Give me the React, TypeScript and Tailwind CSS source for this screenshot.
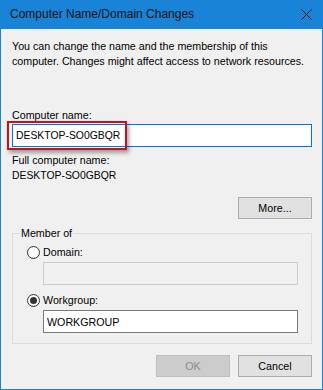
import React from "react"

function Radio({ checked }: { checked?: boolean }) {
  return (
    <span className="w-[13px] h-[13px] rounded-full border border-[#333333] bg-white flex items-center justify-center shrink-0">
      {checked && <span className="w-[7px] h-[7px] rounded-full bg-[#333333]" />}
    </span>
  )
}

export default function App() {
  return (
    <div className="w-[323px] h-[390px] bg-[#1883d7] px-[1px] pb-[1px] flex flex-col font-['Liberation_Sans',Arial,sans-serif] text-[10.7px] leading-[15px] text-black">
      <div className="h-[29px] -mx-[1px] flex items-center justify-between pl-[10px] pr-[11px]">
        <span className="text-[12px] text-[#111111]">Computer Name/Domain Changes</span>
        <svg width="11" height="11" viewBox="0 0 11 11">
          <path d="M0.5 0.5L10.5 10.5M10.5 0.5L0.5 10.5" stroke="#111" strokeWidth="1" />
        </svg>
      </div>

      <div className="flex-1 bg-[#f0f0f0] pl-[11px] pr-[10px] pt-[1px] flex flex-col">
        <p className="mt-[9px] whitespace-nowrap">
          You can change the name and the membership of this
          <br />
          computer. Changes might affect access to network resources.
        </p>

        <label className="mt-[39px]">Computer name:</label>
        <div className="relative mt-[1px]">
          <input
            readOnly
            value="DESKTOP-SO0GBQR"
            className="w-full h-[23px] border border-[#0078d7] bg-white pl-[3px] outline-none text-[10.4px]"
          />
          <div className="absolute -left-[5px] -top-[3px] w-[120px] h-[29px] border-2 border-[#c0141c] shadow-[2px_3px_4px_rgba(0,0,0,0.35)] pointer-events-none" />
        </div>

        <p className="mt-[6px]">Full computer name:</p>
        <p className="text-[10.4px]">DESKTOP-SO0GBQR</p>

        <div className="flex justify-end mt-[14px]">
          <button className="w-[74px] h-[22px] bg-[#e1e1e1] border border-[#adadad]">More...</button>
        </div>

        <fieldset className="mt-[7px] border border-[#dcdcdc] pl-[14px] pr-[13px] pt-[4px] pb-[10px]">
          <legend className="-ml-[7px] px-[1px]">Member of</legend>
          <div className="flex items-center gap-[3px] h-[15px]">
            <Radio />
            <span>Domain:</span>
          </div>
          <div className="ml-[16px] mt-[2px] h-[23px] border border-[#cccccc] bg-[#f0f0f0]" />
          <div className="flex items-center gap-[3px] h-[15px] mt-[8px]">
            <Radio checked />
            <span>Workgroup:</span>
          </div>
          <input
            readOnly
            value="WORKGROUP"
            className="ml-[16px] mt-[2px] w-[calc(100%-16px)] h-[23px] border border-[#7a7a7a] bg-white pl-[3px] outline-none block"
          />
        </fieldset>

        <div className="flex justify-end gap-[8px] mt-[11px]">
          <button disabled className="w-[74px] h-[22px] bg-[#cccccc] border border-[#bfbfbf] text-[#8a8a8a]">OK</button>
          <button className="w-[74px] h-[22px] bg-[#e1e1e1] border border-[#adadad]">Cancel</button>
        </div>
      </div>
    </div>
  )
}
